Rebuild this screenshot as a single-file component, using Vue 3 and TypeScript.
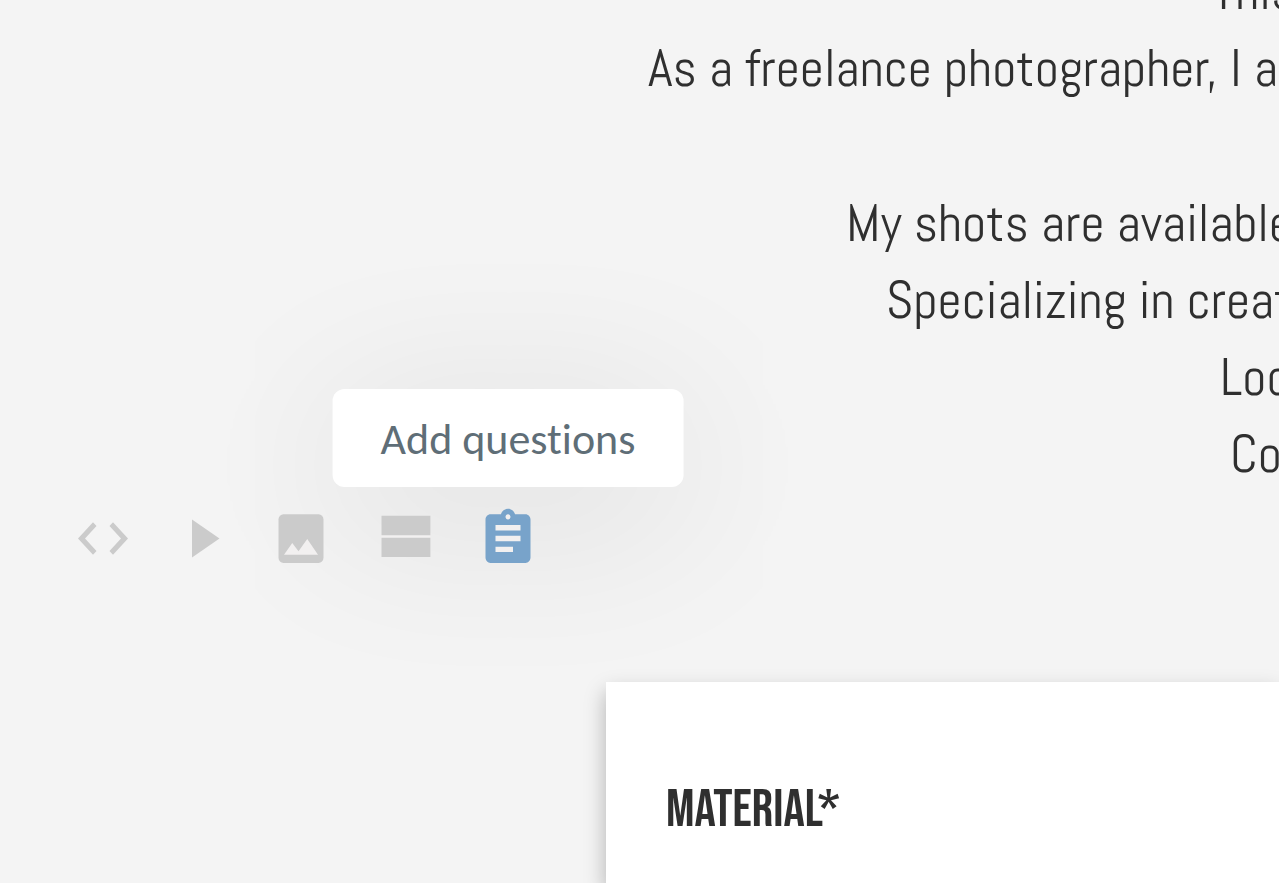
<script setup lang="ts">
interface Line {
  text: string
  place: string
}

const intro: Line[] = [
  { text: 'This', place: 'from-this' },
  { text: 'As a freelance photographer, I am', place: 'from-as' },
]

const details: Line[] = [
  { text: 'My shots are available', place: 'from-shots' },
  { text: 'Specializing in creat', place: 'from-special' },
  { text: 'Loc', place: 'from-loc' },
  { text: 'Co', place: 'from-co' },
]
</script>

<template>
  <main class="page">
    <section class="story">
      <p>
        <span v-for="line in intro" :key="line.text" class="line" :class="line.place">{{ line.text }}</span>
      </p>
      <p>
        <span v-for="line in details" :key="line.text" class="line" :class="line.place">{{ line.text }}</span>
      </p>
    </section>

    <div class="toolbar" role="toolbar" aria-label="Insert block">
      <button type="button" aria-label="Add code">
        <svg class="icon" viewBox="0 0 24 24" preserveAspectRatio="none">
          <path d="M9.4 16.6 4.8 12l4.6-4.6L8 6l-6 6 6 6 1.400-1.400zM14.600 16.600l4.600-4.600-4.600-4.600L16 6l6 6-6 6-1.400-1.400z" />
        </svg>
      </button>
      <button type="button" aria-label="Add video">
        <svg class="icon" viewBox="0 0 24 24" preserveAspectRatio="none">
          <path d="M8 5v14l11-7z" />
        </svg>
      </button>
      <button type="button" aria-label="Add image">
        <svg class="icon" viewBox="0 0 24 24" preserveAspectRatio="none">
          <rect x="3" y="3" width="18" height="18" rx="2" />
          <path class="cutout" d="M5.200 18l3.300-4.300 2.500 3 3.500-4.500 4.300 5.800z" />
        </svg>
      </button>
      <button type="button" aria-label="Add section">
        <svg class="icon wide" viewBox="0 0 24 24" preserveAspectRatio="none">
          <path class="cutout" d="M4 10.500h17v2H4z" />
          <path d="M4 18h17v-6.100H4zM4 5v6.100h17V5z" />
        </svg>
      </button>
      <button type="button" class="active" aria-label="Add questions" aria-describedby="tip">
        <svg class="icon" viewBox="0 0 24 24" preserveAspectRatio="none">
          <path class="cutout" d="M6 4h12v13.500H6zM11 2.800h2v2.400h-2z" />
          <path
            fill-rule="evenodd"
            d="M19 3h-4.180C14.400 1.840 13.300 1 12 1s-2.400.840-2.820 2H5c-1.100 0-2 .9-2 2v14c0 1.100.9 2 2 2h14c1.100 0 2-.9 2-2V5c0-1.100-.9-2-2-2zm-7 0c.55 0 1 .45 1 1s-.45 1-1 1-1-.45-1-1 .45-1 1-1zm2 14H7v-2h7zm3-4H7v-2h10zm0-4H7V7h10z"
          />
        </svg>
        <span id="tip" class="tooltip" role="tooltip">Add questions</span>
      </button>
    </div>

    <section class="card">
      <h2>MATERIAL*</h2>
    </section>
  </main>
</template>

<style>
body {
  margin: 0;
  background: #f4f4f4;
}
</style>

<style scoped>
.page {
  min-height: 100vh;
  display: flex;
  flex-direction: column;
  overflow: hidden;
  background: #f4f4f4;
  color: #2f2f2f;
}

.story {
  margin-top: -47px;
  font-family: Abel, "Roboto Condensed", Roboto, sans-serif;
  font-size: 53px;
  font-weight: 400;
  line-height: 77px;
}

.story p {
  margin: 0 0 78px;
}

.story p:last-child {
  margin-bottom: 0;
}

.line {
  display: block;
  overflow: hidden;
  white-space: nowrap;
}

.from-this { padding-left: 1212px; }
.from-as { padding-left: 648px; }
.from-shots { padding-left: 846px; }
.from-special { padding-left: 886px; }
.from-loc { padding-left: 1220px; }
.from-co { padding-left: 1230px; }

.toolbar {
  position: relative;
  isolation: isolate;
  display: flex;
  align-items: center;
  gap: 39px;
  padding: 7px 73px 0;
}

.toolbar button {
  position: relative;
  display: flex;
  padding: 0;
  border: 0;
  background: none;
  color: #cbcbcb;
  cursor: pointer;
}

.toolbar .active {
  color: #78a3ca;
}

.icon {
  width: 60px;
  height: 65px;
  fill: currentColor;
}

.icon.wide {
  width: 69px;
  height: 76px;
}

.cutout {
  fill: #f2f0f0;
}

.tooltip {
  position: absolute;
  z-index: -1;
  bottom: 84px;
  left: 50%;
  transform: translateX(-50%);
  padding: 21px 48px 19px;
  border-radius: 12px;
  background: #fff;
  box-shadow: 0 27px 180px rgba(0, 0, 0, 0.11);
  color: #5f6e77;
  font-family: Carlito, Lato, sans-serif;
  font-size: 44px;
  font-variant-ligatures: none;
  line-height: 58px;
  white-space: nowrap;
}

.card {
  position: relative;
  flex: 1;
  margin: 106px 0 0 606px;
  padding: 98px 60px 20px;
  background: #fff;
  box-shadow: 0 10px 20px rgba(0, 0, 0, 0.28);
}

.card h2 {
  margin: 0;
  font-family: "Bebas Neue", Oswald, "Roboto Condensed", Roboto, sans-serif;
  font-size: 53px;
  font-weight: 400;
  line-height: 60px;
}
</style>
